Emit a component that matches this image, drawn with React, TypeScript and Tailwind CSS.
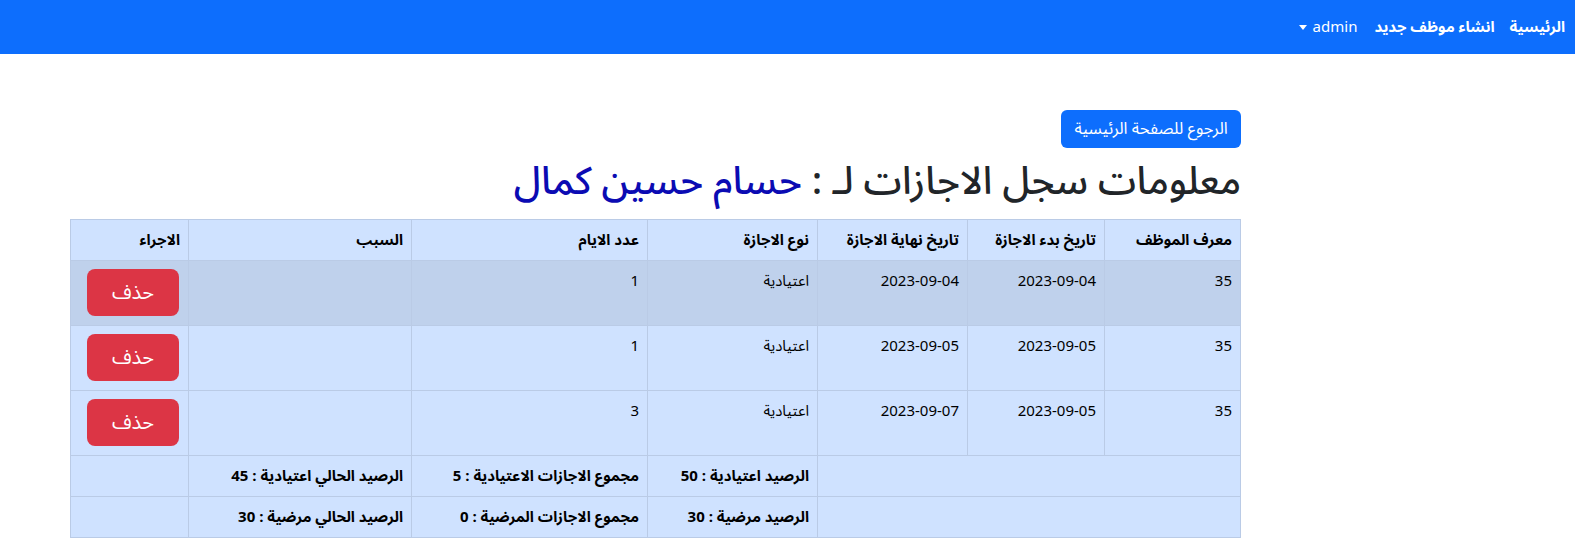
import React from "react";

const font = { fontFamily: '"Noto Sans Arabic", "DejaVu Sans", "Noto Sans", sans-serif' };

const rows = [
  { id: "35", start: "2023-09-04", end: "2023-09-04", type: "اعتيادية", days: "1", active: true },
  { id: "35", start: "2023-09-05", end: "2023-09-05", type: "اعتيادية", days: "1", active: false },
  { id: "35", start: "2023-09-05", end: "2023-09-07", type: "اعتيادية", days: "3", active: false },
];

export default function App() {
  return (
    <div dir="rtl" className="min-h-[555px] bg-white text-[#212529] text-[16px]" style={font}>
      <nav className="h-[54px] bg-[#0d6efd] flex items-center pr-[10px]">
        <a className="text-white font-bold text-[15px] leading-6">الرئيسية</a>
        <a className="text-white font-bold text-[15px] leading-6 mr-[15px]">انشاء موظف جديد</a>
        <a className="text-white text-[15px] leading-6 mr-[17px] flex items-center gap-[6px]">
          <span dir="ltr">admin</span>
          <svg width="8" height="5" viewBox="0 0 8 5"><path d="M0 0h8L4 5z" fill="white" /></svg>
        </a>
      </nav>
      <div className="w-[1170px] mr-[334px] pt-[56px]">
        <div className="flex">
          <button className="bg-[#0d6efd] text-white rounded-[6px] h-[38px] w-[180px] text-[16.5px] leading-6">
            الرجوع للصفحة الرئيسية
          </button>
        </div>
        <h1 className="text-[38.5px] leading-[50px] mt-[9px] mb-[12px] font-medium">
          معلومات سجل الاجازات لـ : <span className="text-[#0b0bb3]">حسام حسين كمال</span>
        </h1>
        <table className="w-[1170px] border-collapse table-fixed bg-[#cfe2ff] text-black text-[15px]">
          <colgroup>
            <col className="w-[136px]" />
            <col className="w-[137px]" />
            <col className="w-[150px]" />
            <col className="w-[170px]" />
            <col className="w-[236px]" />
            <col className="w-[223px]" />
            <col className="w-[118px]" />
          </colgroup>
          <thead>
            <tr className="h-[41px]">
              {["معرف الموظف", "تاريخ بدء الاجازة", "تاريخ نهاية الاجازة", "نوع الاجازة", "عدد الايام", "السبب", "الاجراء"].map((h) => (
                <th key={h} className="border border-[#bacbe6] px-2 py-2 text-right font-bold leading-6 align-top">
                  {h}
                </th>
              ))}
            </tr>
          </thead>
          <tbody>
            {rows.map((r, i) => (
              <tr key={i} className={r.active ? "bg-[#bfd1ec] h-[65px]" : "h-[65px]"}>
                <td className="border border-[#bacbe6] px-2 py-2 align-top leading-6">{r.id}</td>
                <td className="border border-[#bacbe6] px-2 py-2 align-top leading-6">{r.start}</td>
                <td className="border border-[#bacbe6] px-2 py-2 align-top leading-6">{r.end}</td>
                <td className="border border-[#bacbe6] px-2 py-2 align-top leading-6">{r.type}</td>
                <td className="border border-[#bacbe6] px-2 py-2 align-top leading-6">{r.days}</td>
                <td className="border border-[#bacbe6] px-2 py-2 align-top leading-6"></td>
                <td className="border border-[#bacbe6] px-2 py-2 align-top leading-6">
                  <button className="bg-[#dc3545] text-white rounded-[8px] w-[92px] h-[47px] text-[20px] mr-[1px]">حذف</button>
                </td>
              </tr>
            ))}
            <tr className="h-[41px] font-bold">
              <td colSpan={3} className="border border-[#bacbe6] px-2 py-2 leading-6"></td>
              <td className="border border-[#bacbe6] px-2 py-2 leading-6">الرصيد اعتيادية : 50</td>
              <td className="border border-[#bacbe6] px-2 py-2 leading-6">مجموع الاجازات الاعتيادية : 5</td>
              <td className="border border-[#bacbe6] px-2 py-2 leading-6">الرصيد الحالي اعتيادية : 45</td>
              <td className="border border-[#bacbe6] px-2 py-2 leading-6"></td>
            </tr>
            <tr className="h-[41px] font-bold">
              <td colSpan={3} className="border border-[#bacbe6] px-2 py-2 leading-6"></td>
              <td className="border border-[#bacbe6] px-2 py-2 leading-6">الرصيد مرضية : 30</td>
              <td className="border border-[#bacbe6] px-2 py-2 leading-6">مجموع الاجازات المرضية : 0</td>
              <td className="border border-[#bacbe6] px-2 py-2 leading-6">الرصيد الحالي مرضية : 30</td>
              <td className="border border-[#bacbe6] px-2 py-2 leading-6"></td>
            </tr>
          </tbody>
        </table>
      </div>
    </div>
  );
}
